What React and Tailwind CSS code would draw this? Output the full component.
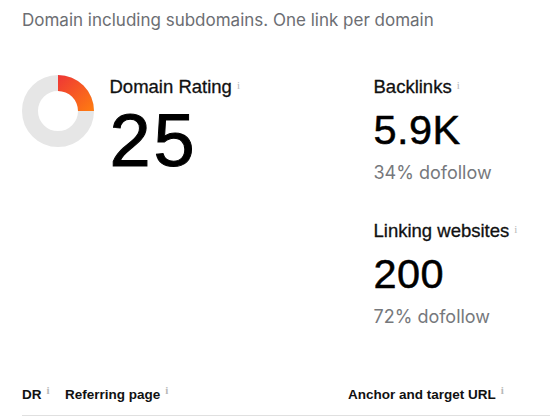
import React from 'react';

const Info = () => (
  <span className="ml-[5px] self-start text-[11px] leading-none text-[#b8b8b8] [font-family:'Liberation_Serif',serif] [-webkit-text-stroke:0px]">
    i
  </span>
);

const Donut = () => (
  <svg width="72" height="72" viewBox="0 0 72 72" className="shrink-0 -mt-px">
    <defs>
      <linearGradient id="dr" x1="0" y1="0" x2="1" y2="1">
        <stop offset="0%" stopColor="#ee3636" />
        <stop offset="100%" stopColor="#ff7d10" />
      </linearGradient>
    </defs>
    <circle cx="36" cy="36" r="28" fill="none" stroke="#e6e6e6" strokeWidth="16" />
    <path d="M36 0 A36 36 0 0 1 72 36 L56 36 A20 20 0 0 0 36 16 Z" fill="url(#dr)" />
  </svg>
);

const Metric = ({ label, value, sub, className = '' }) => (
  <div className={className}>
    <div className="flex items-start text-[18.5px] leading-[22px] text-[#111] [-webkit-text-stroke:0.3px_#111]">
      <span>{label}</span>
      <span className="mt-[4px] flex"><Info /></span>
    </div>
    <div className="mt-[12px] text-[41.5px] leading-[40px] tracking-[0.01em] text-black [-webkit-text-stroke:0.5px_#000]">{value}</div>
    <div className="mt-[11px] text-[18px] leading-[24px] text-[#76787c] [font-family:Inter,sans-serif]">{sub}</div>
  </div>
);

const App = () => {
  return (
    <div className="min-h-[417px] bg-white pl-[22px] [font-family:'Liberation_Sans',Arial,sans-serif] overflow-hidden">
      <p className="pt-[8px] text-[17px] leading-[24px] text-[#6c6e73] [font-family:Inter,sans-serif]">
        Domain including subdomains. One link per domain
      </p>

      <div className="mt-[44px] flex">
        <div className="flex w-[351.5px] shrink-0">
          <Donut />
          <div className="ml-[15.5px]">
            <div className="flex items-start text-[18.5px] leading-[22px] text-[#111] [-webkit-text-stroke:0.3px_#111]">
              <span>Domain Rating</span>
              <span className="mt-[4px] flex"><Info /></span>
            </div>
            <div className="mt-[7px] text-[74px] leading-[72px] tracking-[0.04em] text-black [-webkit-text-stroke:1px_#000]">25</div>
          </div>
        </div>
        <div>
          <Metric label="Backlinks" value="5.9K" sub="34% dofollow" />
          <Metric className="mt-[35px]" label="Linking websites" value="200" sub="72% dofollow" />
        </div>
      </div>

      <div className="mt-[58px] flex items-start border-b border-[#e0e0e0] pb-[12px] text-[13.5px] font-bold leading-[16px] text-[#111]">
        <div className="flex w-[43px] shrink-0">
          <span>DR</span>
          <span className="-mt-[2px] flex"><Info /></span>
        </div>
        <div className="flex w-[283px] shrink-0">
          <span>Referring page</span>
          <span className="-mt-[2px] flex"><Info /></span>
        </div>
        <div className="flex">
          <span>Anchor and target URL</span>
          <span className="-mt-[2px] flex"><Info /></span>
        </div>
      </div>
    </div>
  );
};

export default App;
